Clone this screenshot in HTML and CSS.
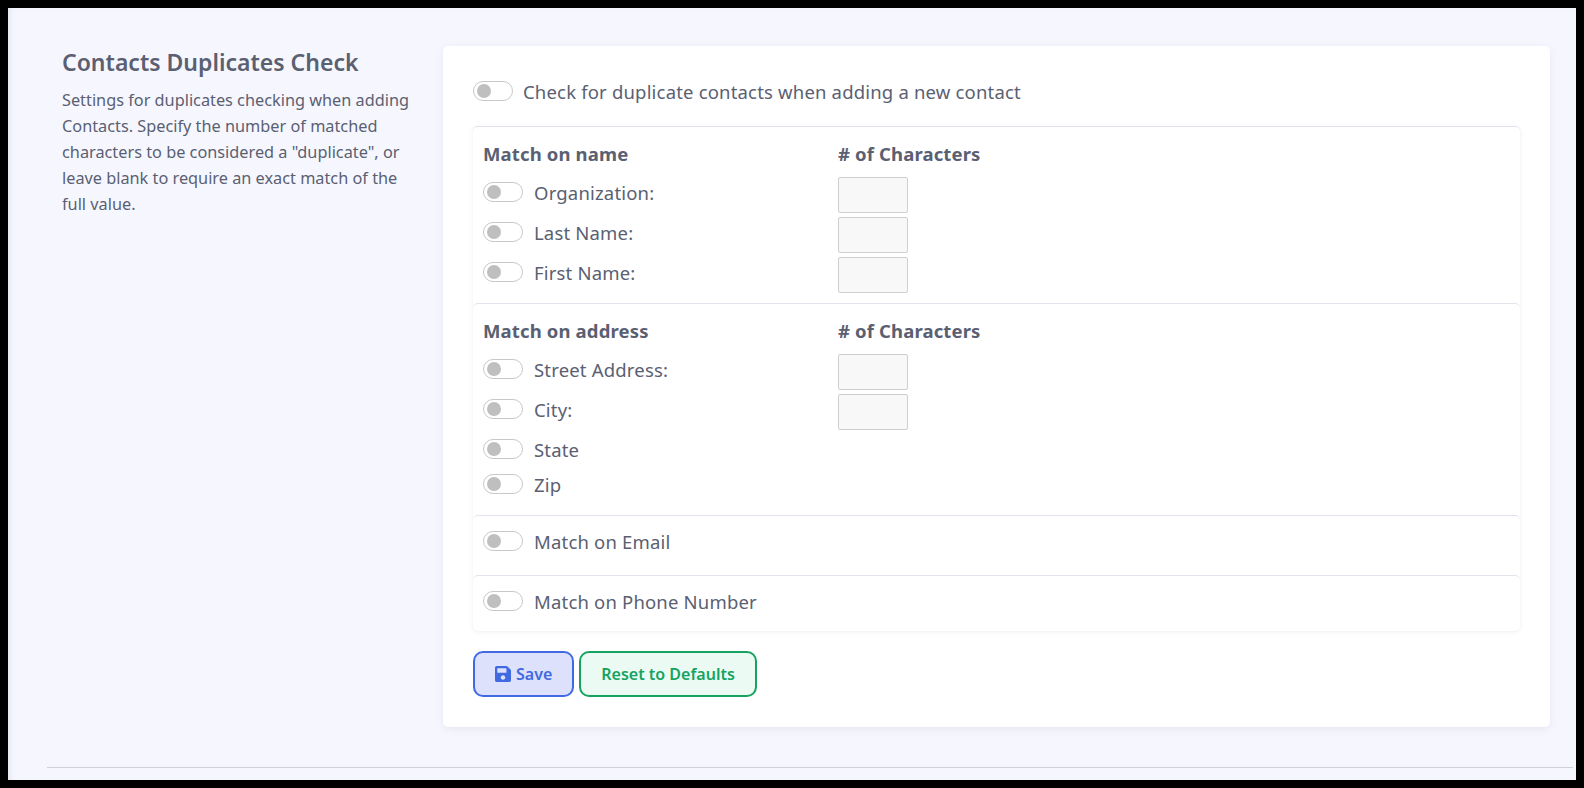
FILE: index.html
```html
<!DOCTYPE html>
<html lang="en">
<head>
<meta charset="utf-8">
<title>Contacts Duplicates Check</title>
<link rel="stylesheet" href="styles.css">
</head>
<body>
<main class="page">
  <section class="layout">
    <aside class="intro">
      <h2>Contacts Duplicates Check</h2>
      <p>Settings for duplicates checking when adding Contacts. Specify the number of matched characters to be considered a "duplicate", or leave blank to require an exact match of the full value.</p>
    </aside>
    <form class="card">
      <label class="master"><span class="toggle"></span><span class="master-text">Check for duplicate contacts when adding a new contact</span></label>
      <div class="panel">
        <div class="box box-name">
          <div class="fields">
            <div class="col-toggles">
              <div class="head">Match on name</div>
              <label class="row"><span class="toggle"></span>Organization:</label>
              <label class="row"><span class="toggle"></span>Last Name:</label>
              <label class="row"><span class="toggle"></span>First Name:</label>
            </div>
            <div class="col-inputs">
              <div class="head">&#35; of Characters</div>
              <input class="num" type="text">
              <input class="num" type="text">
              <input class="num" type="text">
            </div>
          </div>
        </div>
        <div class="box box-address">
          <div class="fields">
            <div class="col-toggles">
              <div class="head">Match on address</div>
              <label class="row"><span class="toggle"></span>Street Address:</label>
              <label class="row"><span class="toggle"></span>City:</label>
              <label class="row row-compact"><span class="toggle"></span>State</label>
              <label class="row"><span class="toggle"></span>Zip</label>
            </div>
            <div class="col-inputs">
              <div class="head">&#35; of Characters</div>
              <input class="num" type="text">
              <input class="num" type="text">
            </div>
          </div>
        </div>
        <div class="box box-email"><label class="row"><span class="toggle"></span>Match on Email</label></div>
        <div class="box box-phone"><label class="row"><span class="toggle"></span>Match on Phone Number</label></div>
      </div>
      <div class="actions">
        <button class="btn btn-save" type="button"><svg class="save-icon" viewBox="0 32 448 448" aria-hidden="true"><path fill="currentColor" d="M433.941 129.941l-83.882-83.882A48 48 0 0 0 316.118 32H48C21.49 32 0 53.49 0 80v352c0 26.51 21.49 48 48 48h352c26.51 0 48-21.49 48-48V163.882a48 48 0 0 0-14.059-33.941zM224 416c-35.346 0-64-28.654-64-64 0-35.346 28.654-64 64-64s64 28.654 64 64c0 35.346-28.654 64-64 64zm96-304.52V212c0 6.627-5.373 12-12 12H76c-6.627 0-12-5.373-12-12V108c0-6.627 5.373-12 12-12h228.52c3.183 0 6.235 1.264 8.485 3.515l3.48 3.48A11.996 11.996 0 0 1 320 111.48z"/></svg>Save</button>
        <button class="btn btn-reset" type="button">Reset to Defaults</button>
      </div>
    </form>
  </section>
  <hr class="rule">
</main>
</body>
</html>
```
FILE: styles.css
```css
* { box-sizing: border-box; }
html { background: #000; height: 100%; overflow: hidden; }
body {
  margin: 0;
  padding: 8px;
  height: 788px;
  background: #000;
  font-family: "Noto Sans", "Liberation Sans", sans-serif;
  color: #5a6072;
}
.page {
  height: 772px;
  background: #f6f7fe;
  box-shadow: inset 6px 0 8px -6px rgba(90, 90, 130, 0.18);
  padding: 38px 11px 0 31px;
  display: flex;
  flex-direction: column;
}
.layout { display: flex; height: 681px; margin-left: 8px; }
.intro { width: 396px; padding: 0 21px 0 15px; flex: none; }
.intro h2 {
  margin: 0;
  font-size: 23px;
  line-height: 32px;
  font-weight: 600;
  color: #5a6072;
}
.intro p {
  margin: 9px 0 0;
  font-size: 16.3px;
  line-height: 26px;
}
.card {
  flex: 1;
  margin-right: 15px;
  background: #fff;
  border-radius: 5px;
  box-shadow: 0 2px 8px rgba(80, 80, 130, 0.1);
  padding: 30px;
}
.master { display: flex; align-items: center; height: 30px; font-size: 18.5px; letter-spacing: 0.18px; }
.master-text { margin-left: 10px; }
.toggle {
  flex: none;
  position: relative;
  display: block;
  width: 40px;
  height: 20px;
  border: 1px solid #c8c8c8;
  border-radius: 10px;
  background: #fff;
}
.toggle::before {
  content: "";
  position: absolute;
  left: 3px;
  top: 2px;
  width: 14px;
  height: 14px;
  border-radius: 50%;
  background: #bfbfbf;
}
.panel {
  margin-top: 20px;
  border-radius: 5px;
  box-shadow: 0 1px 4px rgba(80, 80, 130, 0.1);
}
.box {
  padding: 0 10px;
  border-top: 1px solid #e2e4ec;
  border-radius: 5px;
}
.box-name { height: 177px; }
.box-address { height: 212px; }
.box-email { height: 60px; padding-top: 10px; }
.box-phone { height: 56px; padding-top: 10px; }
.fields { display: flex; }
.col-toggles { width: 355px; }
.col-inputs { display: flex; flex-direction: column; align-items: flex-start; }
.head {
  height: 25px;
  margin: 14px 0 11px;
  font-size: 18.5px;
  line-height: 25px;
  font-weight: 700;
  letter-spacing: 0.14px;
}
.row {
  display: flex;
  align-items: center;
  gap: 11px;
  height: 30px;
  margin-bottom: 10px;
  font-size: 18.5px;
  letter-spacing: 0.18px;
}
.row-compact { margin-bottom: 5px; }
.num {
  display: block;
  width: 70px;
  height: 36px;
  margin: 0 0 4px;
  padding: 0;
  background: #f8f8f8;
  border: 1px solid #cfcfcf;
  border-radius: 2px;
}
.actions { display: flex; gap: 5px; margin-top: 20px; }
.btn {
  height: 46px;
  padding: 0 20px;
  font: 600 16px "Noto Sans", "Liberation Sans", sans-serif;
  border-radius: 10px;
  border: 2px solid;
  display: flex;
  align-items: center;
  gap: 5px;
}
.btn-save { background: #dde1fc; border-color: #4169e1; color: #4169e1; }
.btn-reset { background: #ebfbf4; border-color: #16a360; color: #16a360; }
.save-icon { width: 16px; height: 16px; }
.rule {
  margin: 40px 0 0 8px;
  height: 1px;
  border: 0;
  background: #cfd0d8;
  width: 1526px;
  flex: none;
}
```
